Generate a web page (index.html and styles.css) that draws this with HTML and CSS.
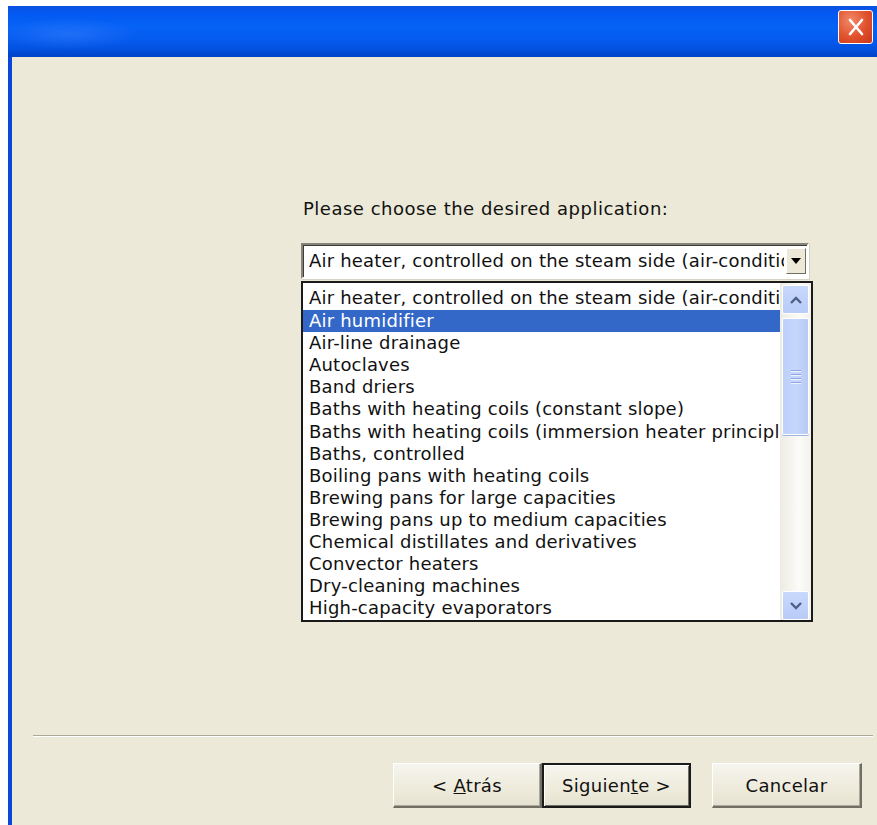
FILE: index.html
```html
<!DOCTYPE html>
<html lang="en">
<head>
<meta charset="utf-8">
<title>Application wizard</title>
<link rel="stylesheet" href="styles.css">
</head>
<body>
<div class="window">
  <div class="titlebar">
    <span class="close-btn" aria-label="Close">
      <svg width="22" height="22" viewBox="0 0 22 22"><path d="M5 4 L17 18 M17 4 L5 18" stroke="#fff" stroke-width="2.6" stroke-linecap="round"/></svg>
    </span>
  </div>
  <div class="client">
    <div class="page">
      <p class="prompt">Please choose the desired application:</p>
      <div class="combo">
        <span class="combo-text">Air heater, controlled on the steam side (air-conditioning)</span>
        <span class="combo-btn"><svg width="12" height="8" viewBox="0 0 12 8"><path d="M1 1 H11 L6 7 Z" fill="#000"/></svg></span>
      </div>
      <div class="list">
        <ul class="items">
          <li>Air heater, controlled on the steam side (air-conditioning)</li>
          <li class="selected">Air humidifier</li>
          <li>Air-line drainage</li>
          <li>Autoclaves</li>
          <li>Band driers</li>
          <li>Baths with heating coils (constant slope)</li>
          <li>Baths with heating coils (immersion heater principle)</li>
          <li>Baths, controlled</li>
          <li>Boiling pans with heating coils</li>
          <li>Brewing pans for large capacities</li>
          <li>Brewing pans up to medium capacities</li>
          <li>Chemical distillates and derivatives</li>
          <li>Convector heaters</li>
          <li>Dry-cleaning machines</li>
          <li>High-capacity evaporators</li>
        </ul>
        <div class="scrollbar">
          <span class="sb-btn"><svg width="14" height="10" viewBox="0 0 14 10"><path d="M2 8 L7 3 L12 8" fill="none" stroke="#4D6185" stroke-width="2.4"/></svg></span>
          <span class="sb-thumb"><span class="grip"></span><span class="grip"></span><span class="grip"></span><span class="grip"></span></span>
          <span class="sb-track"></span>
          <span class="sb-btn"><svg width="14" height="10" viewBox="0 0 14 10"><path d="M2 2 L7 7 L12 2" fill="none" stroke="#4D6185" stroke-width="2.4"/></svg></span>
        </div>
      </div>
    </div>
    <div class="separator"></div>
    <div class="buttons">
      <button class="btn">&lt; <u>A</u>trás</button>
      <button class="btn default">Siguien<u>t</u>e &gt;</button>
      <button class="btn cancel">Cancelar</button>
    </div>
  </div>
</div>
</body>
</html>
```

FILE: styles.css
```css
html, body {
  margin: 0;
  padding: 0;
  background: #fff;
  width: 877px;
  height: 825px;
  overflow: hidden;
}

.window {
  margin: 6px 0 0 8px;
  width: 869px;
  height: 819px;
  display: flex;
  flex-direction: column;
  font-family: "DejaVu Sans", Verdana, sans-serif;
  font-size: 18px;
  letter-spacing: 0.5px;
  color: #111;
}

.titlebar {
  height: 51px;
  flex: none;
  display: flex;
  justify-content: flex-end;
  align-items: flex-start;
  background:
    radial-gradient(ellipse 70px 16px at 60px 28px, rgba(80,140,255,0.35), rgba(80,140,255,0) 100%),
    linear-gradient(to bottom, #0A50E2 0%, #0359F2 15%, #0662F6 40%, #055BEF 65%, #0351E0 85%, #0043C4 100%);
}

.close-btn {
  width: 35px;
  height: 34px;
  margin: 4px 4px 0 0;
  box-sizing: border-box;
  border: 1px solid #fff;
  border-radius: 3px;
  background: radial-gradient(ellipse at 35% 30%, #F08A6A 0%, #E0502C 55%, #C8381A 100%);
  display: flex;
  align-items: center;
  justify-content: center;
}

.client {
  flex: 1;
  background: #ECE9D8;
  border-left: 4px solid #0A46DA;
  display: flex;
  flex-direction: column;
}

.page {
  padding-left: 289px;
  height: 678px;
  display: flex;
  flex-direction: column;
}

.prompt {
  margin: 141px 0 0 2px;
  line-height: 21px;
  height: 21px;
}

.combo {
  margin-top: 24px;
  width: 508px;
  height: 36px;
  box-sizing: border-box;
  background: #fff;
  border-top: 2px solid #85837A;
  border-left: 2px solid #85837A;
  border-right: 2px solid #fff;
  border-bottom: 2px solid #fff;
  box-shadow: inset 1px 1px 0 #3E3D38, 1px 1px 0 #D6D3C4;
  display: flex;
  align-items: center;
  overflow: hidden;
  letter-spacing: 0.2px;
}

.combo-text {
  flex: 1;
  white-space: nowrap;
  overflow: hidden;
  padding-left: 6px;
  line-height: 22px;
}

.combo-btn {
  flex: none;
  width: 20px;
  height: 26px;
  margin: 0 1px 0 2px;
  box-sizing: border-box;
  background: #ECE9D8;
  border-top: 1px solid #fff;
  border-left: 1px solid #fff;
  border-right: 1px solid #716F64;
  border-bottom: 1px solid #716F64;
  display: flex;
  align-items: center;
  justify-content: center;
}

.list {
  margin-top: 2px;
  width: 512px;
  height: 341px;
  box-sizing: border-box;
  background: #fff;
  border: 2px solid #1A1A1A;
  display: flex;
  letter-spacing: 0.2px;
}

.items {
  list-style: none;
  margin: 0;
  padding: 4px 0 0 0;
  flex: 1;
  min-width: 0;
  overflow: hidden;
}

.items li {
  height: 22.1px;
  line-height: 22px;
  padding-left: 6px;
  white-space: nowrap;
  overflow: hidden;
}

.items li.selected {
  background: #3468C8;
  color: #fff;
  margin-top: 1px;
}

.scrollbar {
  flex: none;
  width: 31px;
  padding: 2px 2px 0 2px;
  box-sizing: border-box;
  display: flex;
  flex-direction: column;
  background: linear-gradient(to right, #EDEBE2, #FBFBF8 60%, #F3F2EC);
}

.sb-btn {
  flex: none;
  height: 29px;
  box-sizing: border-box;
  border: 1px solid #fff;
  border-radius: 2px;
  background: linear-gradient(to bottom, #C8D8FC, #B8CCF8);
  display: flex;
  align-items: center;
  justify-content: center;
}

.sb-thumb {
  flex: none;
  margin-top: 4px;
  height: 117px;
  box-sizing: border-box;
  border: 1px solid #fff;
  border-radius: 2px;
  background: linear-gradient(to right, #BDD0FA, #C6D7FC 50%, #B6CAF6);
  box-shadow: 0 1px 0 #A0B4E0;
  display: flex;
  flex-direction: column;
  align-items: center;
  justify-content: center;
  gap: 2px;
}

.grip {
  width: 10px;
  height: 1px;
  background: #8EA7E0;
  border-bottom: 1px solid #EEF3FE;
}

.sb-track {
  flex: 1;
}

.separator {
  margin: 0 4px 0 21px;
  height: 1px;
  background: #ACA899;
  border-bottom: 1px solid #fff;
}

.buttons {
  margin-top: 26px;
  display: flex;
  padding-left: 381px;
}

.btn {
  width: 149px;
  height: 45px;
  box-sizing: border-box;
  font-family: "DejaVu Sans", Verdana, sans-serif;
  font-size: 18px;
  letter-spacing: 0.3px;
  color: #111;
  background: linear-gradient(to bottom, #F6F5EE, #ECE9D8 70%, #E4E1D1);
  border-top: 1px solid #fff;
  border-left: 1px solid #fff;
  border-right: 2px solid #716F64;
  border-bottom: 2px solid #716F64;
  padding: 0;
  box-shadow: inset -1px -1px 0 #ACA899;
}

.btn.default {
  border: 2px solid #1A1A1A;
  box-shadow: inset 1px 1px 0 #fff, inset -1px -1px 0 #716F64;
}

.btn.cancel {
  margin-left: 21px;
  width: 150px;
}
```
